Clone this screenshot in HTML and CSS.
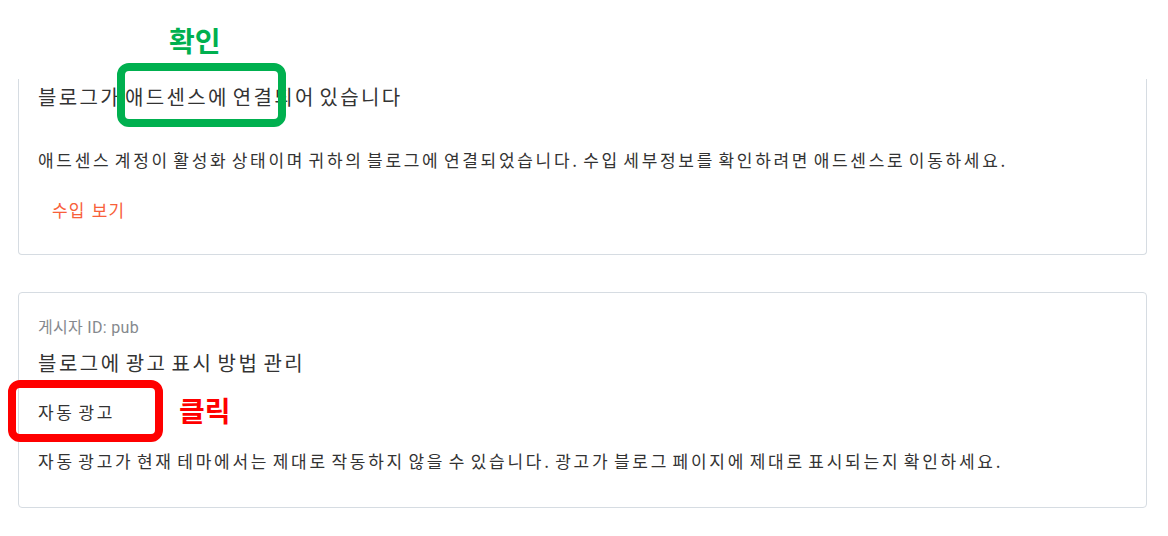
FILE: index.html
```html
<!DOCTYPE html>
<html lang="ko">
<head>
<meta charset="utf-8">
<link rel="stylesheet" href="styles.css">
</head>
<body>
<main class="page">
  <section class="card card-clipped">
    <h2 class="title">블로그가 애드센스에 연결되어 있습니다</h2>
    <p class="body-text">애드센스 계정이 활성화 상태이며 귀하의 블로그에 연결되었습니다. 수입 세부정보를 확인하려면 애드센스로 이동하세요.</p>
    <button class="link-btn" type="button">수입 보기</button>
  </section>
  <section class="card card-second">
    <div class="label">게시자 ID: pub</div>
    <h2 class="title title-second">블로그에 광고 표시 방법 관리</h2>
    <div class="sub">자동 광고</div>
    <p class="body-text body-second">자동 광고가 현재 테마에서는 제대로 작동하지 않을 수 있습니다. 광고가 블로그 페이지에 제대로 표시되는지 확인하세요.</p>
  </section>

  <div class="note note-green">확인</div>
  <div class="mark mark-green"></div>
  <div class="note note-red">클릭</div>
  <div class="mark mark-red"></div>
</main>
</body>
</html>
```

FILE: styles.css
```css
html, body {
  margin: 0;
  padding: 0;
  background: #ffffff;
}
body {
  font-family: "Noto Sans CJK KR", "Noto Sans", sans-serif;
  color: #333333;
}
.page {
  position: relative;
  width: 1168px;
  height: 536px;
  padding: 79px 21px 0 18px;
  box-sizing: border-box;
}
.card {
  border: 1px solid #d6dce2;
  border-radius: 4px;
  background: #fff;
  padding-left: 19px;
}
.card-clipped {
  border-top: none;
  border-top-left-radius: 0;
  border-top-right-radius: 0;
  padding-top: 4px;
  padding-bottom: 27px;
}
.card-second {
  margin-top: 37px;
  padding-top: 25px;
  padding-bottom: 34px;
}
.title {
  margin: 0;
  font-size: 20px;
  line-height: 28px;
  font-weight: 400;
  letter-spacing: 2.35px;
  word-spacing: -4px;
  color: #333333;
}
.body-text {
  margin: 37px 0 0;
  font-size: 17px;
  line-height: 24px;
  letter-spacing: 2.7px;
  word-spacing: -4px;
  color: #333333;
}
.link-btn {
  margin: 19px 0 0;
  padding: 0 14px;
  height: 36px;
  border: none;
  background: transparent;
  font-family: inherit;
  font-size: 17px;
  letter-spacing: 1.2px;
  color: #f8603a;
  display: block;
}
.label {
  font-family: "Roboto", "Noto Sans CJK KR", sans-serif;
  font-size: 16px;
  line-height: 20px;
  letter-spacing: 0.3px;
  color: #85898e;
}
.title-second {
  margin-top: 11px;
  letter-spacing: 2.5px;
}
.sub {
  margin-top: 23px;
  font-size: 17px;
  line-height: 24px;
  letter-spacing: 2.5px;
  word-spacing: -3px;
}
.body-second {
  margin-top: 25px;
  letter-spacing: 2.75px;
}
.note {
  position: absolute;
  font-size: 28px;
  font-weight: 700;
  line-height: 32px;
}
.note-green {
  left: 169px;
  top: 24px;
  color: #00b04f;
}
.note-red {
  left: 179px;
  top: 394px;
  color: #ff0000;
}
.mark {
  position: absolute;
  border: 8px solid;
  border-radius: 12px;
  box-sizing: border-box;
}
.mark-green {
  left: 117px;
  top: 63px;
  width: 169px;
  height: 64px;
  border-color: #00b04f;
}
.mark-red {
  left: 8px;
  top: 380px;
  width: 155px;
  height: 62px;
  border-color: #ff0000;
}
```
